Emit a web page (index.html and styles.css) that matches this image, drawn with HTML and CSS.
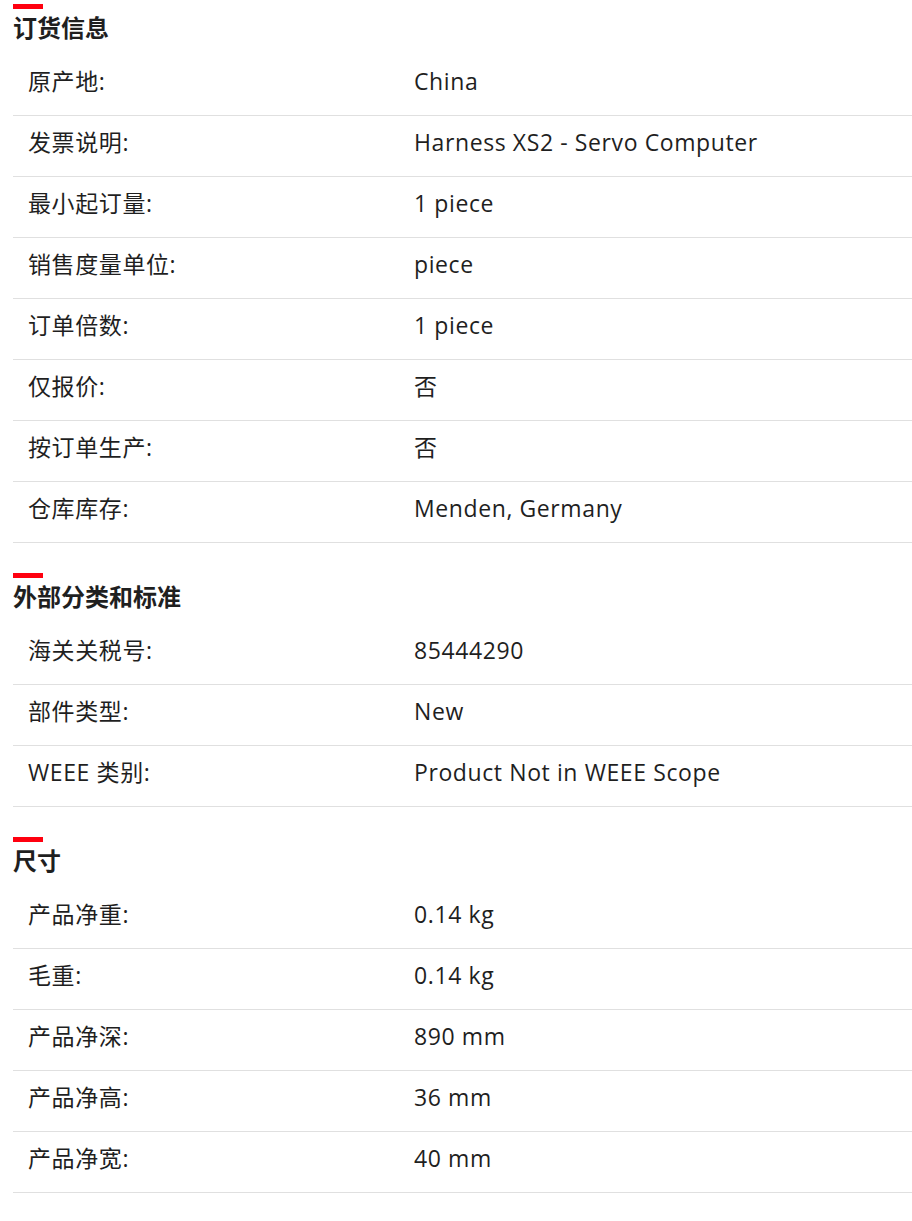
FILE: index.html
```html
<!DOCTYPE html>
<html lang="zh-CN">
<head>
    <meta charset="UTF-8">
    <meta name="viewport" content="width=device-width, initial-scale=1.0">
    <title>订货信息</title>
    <link rel="stylesheet" href="styles.css">
</head>
<body>
    <div class="specs">
        <section class="section">
            <h2 class="section-title">订货信息</h2>
            <div class="row"><span class="label">原产地:</span><span class="value">China</span></div>
            <div class="row"><span class="label">发票说明:</span><span class="value">Harness XS2 - Servo Computer</span></div>
            <div class="row"><span class="label">最小起订量:</span><span class="value">1 piece</span></div>
            <div class="row"><span class="label">销售度量单位:</span><span class="value">piece</span></div>
            <div class="row"><span class="label">订单倍数:</span><span class="value">1 piece</span></div>
            <div class="row"><span class="label">仅报价:</span><span class="value">否</span></div>
            <div class="row"><span class="label">按订单生产:</span><span class="value">否</span></div>
            <div class="row"><span class="label">仓库库存:</span><span class="value">Menden, Germany</span></div>
        </section>

        <section class="section">
            <h2 class="section-title">外部分类和标准</h2>
            <div class="row"><span class="label">海关关税号:</span><span class="value">85444290</span></div>
            <div class="row"><span class="label">部件类型:</span><span class="value">New</span></div>
            <div class="row"><span class="label">WEEE 类别:</span><span class="value">Product Not in WEEE Scope</span></div>
        </section>

        <section class="section">
            <h2 class="section-title">尺寸</h2>
            <div class="row"><span class="label">产品净重:</span><span class="value">0.14 kg</span></div>
            <div class="row"><span class="label">毛重:</span><span class="value">0.14 kg</span></div>
            <div class="row"><span class="label">产品净深:</span><span class="value">890 mm</span></div>
            <div class="row"><span class="label">产品净高:</span><span class="value">36 mm</span></div>
            <div class="row"><span class="label">产品净宽:</span><span class="value">40 mm</span></div>
        </section>
    </div>
</body>
</html>
```

FILE: styles.css
```css
body {
    margin: 0;
    padding: 0;
    background: #fff;
    color: #1f1f1f;
    font-family: "Open Sans", "Noto Sans CJK SC", sans-serif;
}
.specs {
    padding: 4px 0 0 13px;
}
.section {
    margin-bottom: 30px;
}
.section-title {
    margin: 0 0 12px;
    padding-top: 7px;
    font-size: 24px;
    line-height: 32px;
    font-weight: 700;
    font-family: "Noto Sans CJK SC", sans-serif;
    position: relative;
}
.section-title::before {
    content: "";
    position: absolute;
    left: 0;
    top: 0;
    width: 30px;
    height: 5px;
    background: #ff000f;
}
.row {
    display: grid;
    grid-template-columns: 386px 1fr;
    padding: 11px 0 19px 15px;
    border-bottom: 1px solid #e0e0e0;
    font-size: 23px;
    line-height: 30px;
    letter-spacing: 0.6px;
}
```
